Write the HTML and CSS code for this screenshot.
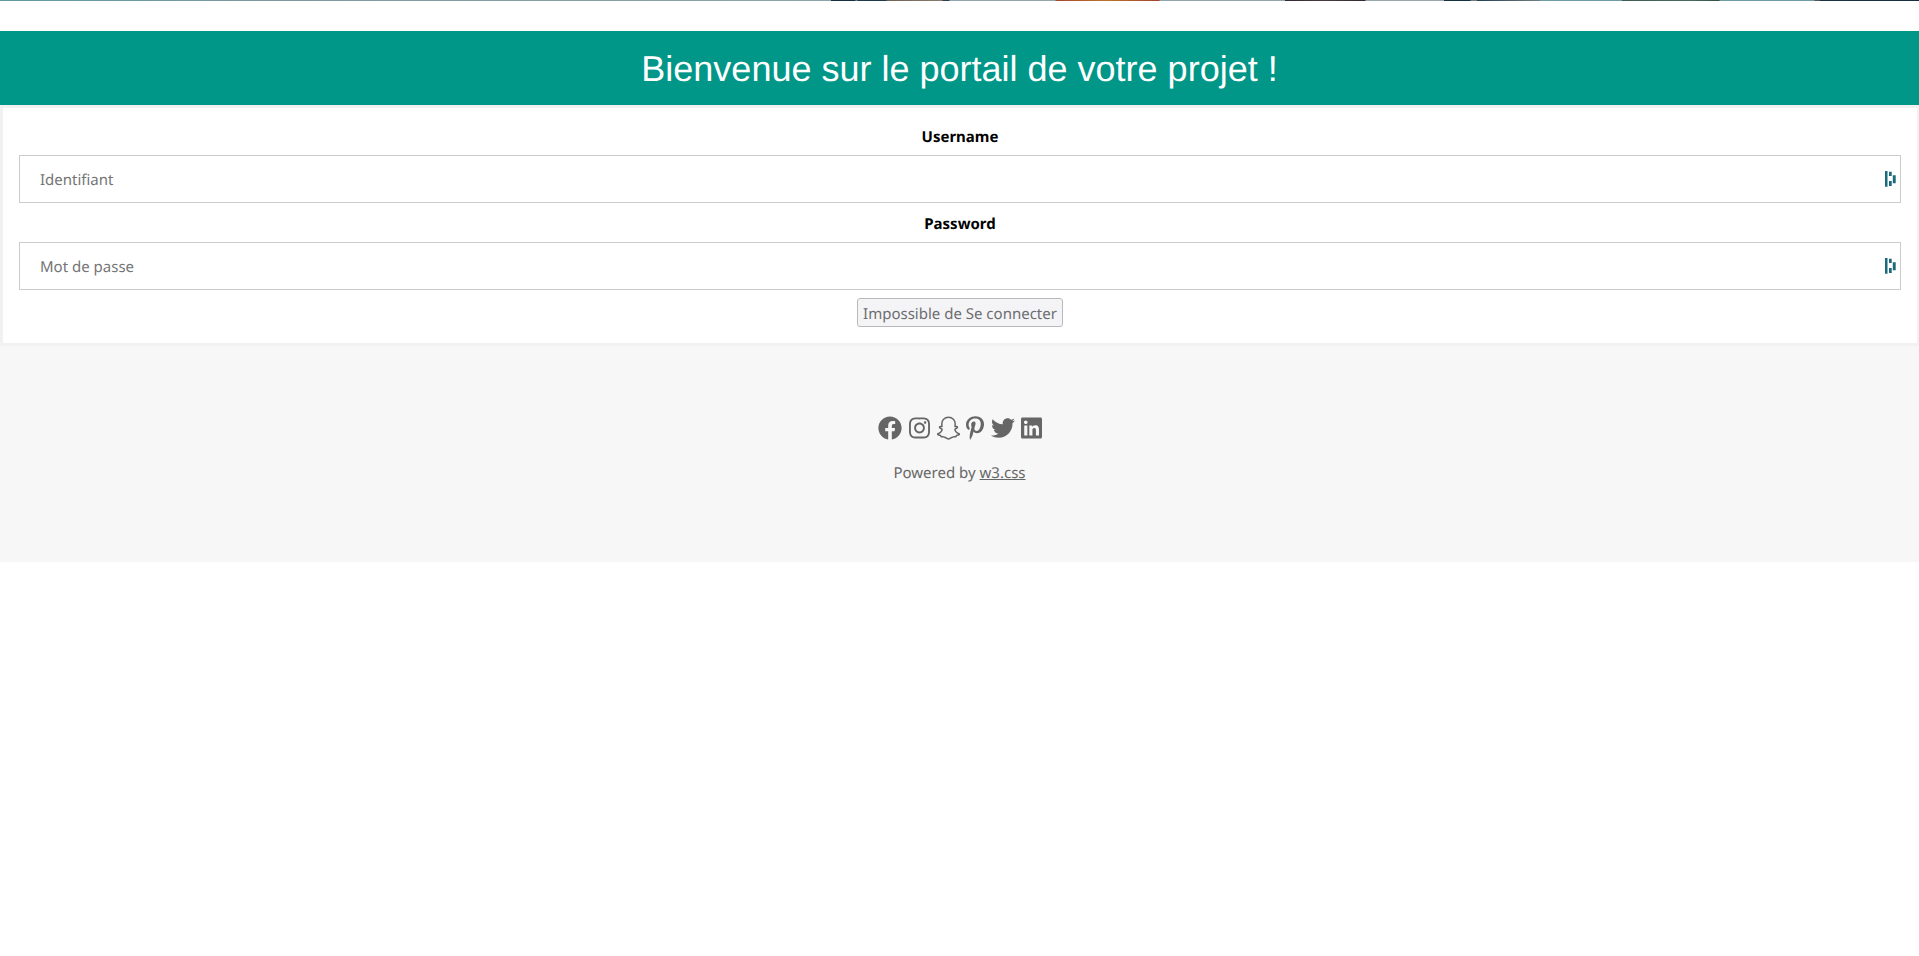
FILE: index.html
```html
<!DOCTYPE html>
<html lang="fr">
<head>
<meta charset="utf-8">
<title>Portail</title>
<link rel="stylesheet" href="styles.css">
</head>
<body>
<div class="strip"></div>
<header class="banner"><h1>Bienvenue sur le portail de votre projet !</h1></header>
<form class="card">
  <label class="lbl" for="u">Username</label>
  <div class="field">
    <input id="u" class="inp" type="text" placeholder="Identifiant">
    <svg class="pm" viewBox="0 0 12 16" width="12" height="16"><path d="M0 0h2.500v15.700H0zM4 .7h2.700v4.300H4zM4 10h2.700v5H4zM7.800 4.300h2.900v8H7.800z"/></svg>
  </div>
  <label class="lbl lbl2" for="p">Password</label>
  <div class="field">
    <input id="p" class="inp" type="password" placeholder="Mot de passe">
    <svg class="pm" viewBox="0 0 12 16" width="12" height="16"><path d="M0 0h2.500v15.700H0zM4 .7h2.700v4.300H4zM4 10h2.700v5H4zM7.800 4.300h2.900v8H7.800z"/></svg>
  </div>
  <div class="actions"><button class="btn" type="button" disabled>Impossible de Se connecter</button></div>
</form>
<footer class="foot">
  <div class="icons">
    <svg class="ic w24" viewBox="0 0 512 512"><path d="M504 256C504 119 393 8 256 8S8 119 8 256c0 123.78 90.69 226.38 209.25 245V327.69h-63V256h63v-54.64c0-62.15 37-96.48 93.67-96.48 27.14 0 55.52 4.84 55.52 4.84v61h-31.28c-30.8 0-40.41 19.12-40.41 38.73V256h68.78l-11 71.69h-57.78V501C413.31 482.38 504 379.78 504 256z"/></svg>
    <svg class="ic w21 nudge" viewBox="0 0 448 512"><path d="M224.1 141c-63.6 0-114.9 51.3-114.9 114.9s51.3 114.9 114.9 114.9S339 319.5 339 255.9 287.7 141 224.1 141zm0 189.6c-41.1 0-74.7-33.5-74.7-74.7s33.5-74.7 74.7-74.7 74.7 33.5 74.7 74.7-33.6 74.7-74.7 74.7zm146.4-194.3c0 14.9-12 26.8-26.8 26.8-14.9 0-26.8-12-26.8-26.8s12-26.8 26.8-26.8 26.8 12 26.8 26.8zm76.1 27.2c-1.7-35.9-9.9-67.7-36.2-93.9-26.2-26.2-58-34.4-93.9-36.2-37-2.1-147.9-2.1-184.9 0-35.8 1.7-67.6 9.9-93.9 36.1s-34.4 58-36.2 93.9c-2.1 37-2.1 147.9 0 184.9 1.7 35.9 9.9 67.7 36.2 93.9s58 34.4 93.9 36.2c37 2.1 147.9 2.1 184.9 0 35.9-1.7 67.7-9.9 93.9-36.2 26.2-26.2 34.4-58 36.2-93.9 2.1-37 2.1-147.8 0-184.8zM398.8 388c-7.8 19.6-22.9 34.7-42.6 42.6-29.5 11.7-99.5 9-132.1 9s-102.7 2.6-132.1-9c-19.6-7.8-34.7-22.9-42.6-42.6-11.7-29.5-9-99.5-9-132.1s-2.6-102.7 9-132.1c7.8-19.6 22.9-34.7 42.6-42.6 29.5-11.7 99.5-9 132.1-9s102.7-2.6 132.1 9c19.6 7.8 34.7 22.9 42.6 42.6 11.7 29.5 9 99.5 9 132.1s2.7 102.7-9 132.1z"/></svg>
    <svg class="ic w23 nudge" viewBox="0 0 23 24"><path class="ghost" d="M11.500 1.300C15.600 1.300 18.200 4.300 18.200 7.800C18.200 8.800 18.100 9.700 18 10.500C18.800 10.800 19.500 10.200 20.100 10.600C20.800 11.100 20.400 11.900 19.500 12.300C18.800 12.600 17.900 12.800 17.900 13.500C17.900 14.900 20 17.300 22.100 17.800C22.500 17.900 22.500 18.400 22.100 18.600C21.300 19.100 20.100 19.200 19.500 19.400C19.100 19.600 19.200 20.600 18.800 20.800C18.200 21 17.100 20.600 16 20.900C14.700 21.200 13.500 22.900 11.500 22.900C9.500 22.900 8.300 21.200 7 20.900C5.900 20.600 4.800 21 4.200 20.800C3.800 20.600 3.900 19.600 3.500 19.400C2.900 19.200 1.700 19.100 .9 18.600C.5 18.400 .5 17.900 .9 17.800C3 17.300 5.100 14.900 5.100 13.500C5.100 12.800 4.200 12.600 3.500 12.300C2.600 11.900 2.200 11.100 2.900 10.600C3.500 10.200 4.200 10.800 5 10.500C4.900 9.700 4.800 8.800 4.800 7.800C4.800 4.300 7.400 1.300 11.500 1.300z"/></svg>
    <svg class="ic w18 nudge-half" viewBox="0 0 384 512"><path d="M204 6.500C101.400 6.500 0 74.900 0 185.600 0 256 39.600 296 63.600 296c9.900 0 15.600-27.600 15.600-35.400 0-9.300-23.700-29.100-23.700-67.800 0-80.400 61.200-137.400 140.400-137.400 68.100 0 118.500 38.700 118.500 109.800 0 53.100-21.300 152.700-90.300 152.700-24.900 0-46.200-18-46.200-43.800 0-37.800 26.400-74.400 26.400-113.400 0-66.200-93.900-54.200-93.900 25.800 0 16.800 2.100 35.400 9.600 50.700-13.800 59.400-42 147.900-42 209.100 0 18.900 2.700 37.500 4.500 56.400 3.400 3.800 1.700 3.400 6.900 1.500 50.400-69 48.600-82.500 71.400-172.800 12.300 23.400 44.100 36 69.300 36 106.200 0 153.900-103.500 153.900-196.800C384 71.300 298.200 6.500 204 6.500z"/></svg>
    <svg class="ic w24 nudge-half" viewBox="0 0 512 512"><path d="M459.370 151.716c.325 4.548.325 9.097.325 13.645 0 138.720-105.583 298.558-298.558 298.558-59.452 0-114.680-17.219-161.137-47.106 8.447.974 16.568 1.299 25.340 1.299 49.055 0 94.213-16.568 130.274-44.832-46.132-.975-84.792-31.188-98.112-72.772 6.498.974 12.995 1.624 19.818 1.624 9.421 0 18.843-1.300 27.614-3.573-48.081-9.747-84.143-51.980-84.143-102.985v-1.299c13.969 7.797 30.214 12.670 47.431 13.319-28.264-18.843-46.781-51.005-46.781-87.391 0-19.492 5.197-37.360 14.294-52.954 51.655 63.675 129.300 105.258 216.365 109.807-1.624-7.797-2.599-15.918-2.599-24.040 0-57.828 46.782-104.934 104.934-104.934 30.213 0 57.502 12.670 76.670 33.137 23.715-4.548 46.456-13.320 66.599-25.340-7.798 24.366-24.366 44.833-46.132 57.827 21.117-2.273 41.584-8.122 60.426-16.243-14.292 20.791-32.161 39.308-52.628 54.253z"/></svg>
    <svg class="ic w21" viewBox="0 0 448 512"><path d="M416 32H31.900C14.300 32 0 46.500 0 64.300v383.400C0 465.500 14.300 480 31.900 480H416c17.600 0 32-14.500 32-32.300V64.300c0-17.800-14.400-32.300-32-32.300zM135.400 416H69V202.200h66.500V416zm-33.200-243c-21.300 0-38.500-17.300-38.500-38.500S80.900 96 102.200 96c21.200 0 38.500 17.300 38.500 38.500 0 21.300-17.200 38.500-38.500 38.500zm282.100 243h-66.400V312c0-24.800-.5-56.700-34.500-56.700-34.600 0-39.900 27-39.900 54.900V416h-66.400V202.200h63.700v29.200h.9c8.900-16.800 30.600-34.500 62.900-34.500 67.200 0 79.700 44.300 79.700 101.900V416z"/></svg>
  </div>
  <p class="powered">Powered by <a href="#">w3.css</a></p>
</footer>
</body>
</html>
```
FILE: styles.css
```css
* { box-sizing: border-box; }
html, body { margin: 0; padding: 0; background: #fff; }
body { font-family: "Noto Sans", "Open Sans", sans-serif; font-size: 15px; line-height: 1.5; color: #000; text-rendering: geometricPrecision; }

.strip {
  height: 1px;
  background: linear-gradient(90deg,
    #5f9aa0 0, #7f989f 280px, #8fa3aa 831px,
    #14303f 831px, #14303f 855px, #8a9ea5 856px, #1d3a4c 858px, #1d3a4c 886px, #6d6258 887px, #8a7a68 942px, #2b3f55 943px, #2b3f55 949px,
    #93a5ad 950px, #93a5ad 1055px,
    #a8452f 1056px, #b8752a 1105px, #a8412f 1159px,
    #93a5ad 1160px, #93a5ad 1285px,
    #2e2a30 1285px, #4a3a40 1325px, #2e2a30 1365px,
    #9aa8ae 1366px, #9aa8ae 1444px,
    #12323f 1444px, #12323f 1470px, #777 1471px, #777 1477px,
    #1f4054 1477px, #5a6a70 1520px, #6d7f85 1540px,
    #6f9da3 1540px, #6f9da3 1622px,
    #3e5c52 1622px, #476b5f 1690px, #33503f 1719px,
    #6f9da3 1720px, #6f9da3 1814px,
    #555 1815px, #555 1820px, #1c3040 1820px, #15303e 1919px);
}

.banner { margin-top: 30px; height: 74px; padding-top: 1px; background: #009688; color: #fff; display: flex; align-items: center; justify-content: center; }
.banner h1 { margin: 0; font-family: "Liberation Sans", Arial, sans-serif; font-size: 36px; font-weight: 400; line-height: 1.2; }

.card { border: 3px solid #f1f1f1; border-right-width: 2px; padding: 17px 16px 16px; display: flex; flex-direction: column; }
.lbl { display: block; text-align: center; font-weight: 700; line-height: 23px; padding-top: 1px; margin-bottom: 6px; }
.lbl2 { margin-top: 9px; }
.field { position: relative; }
.inp { display: block; width: 100%; height: 48px; border: 1px solid #ccc; padding: 9px 20px 7px; font: inherit; color: #000; background: #fff; outline: 0; border-radius: 0; text-rendering: geometricPrecision; }
.inp::placeholder { color: #757575; opacity: 1; }
.pm { position: absolute; right: 4px; top: 16px; fill: #1b6a7c; }

.actions { margin-top: 8px; display: flex; justify-content: center; }
.btn { height: 29px; width: 206px; padding: 3px 0 0; font: inherit; line-height: 1; color: #6d6d71; background: #f4f4f6; border: 1px solid #b9b9bc; border-radius: 3px; text-rendering: geometricPrecision; }

.foot { height: 216px; background: #f7f7f7; padding-top: 70px; color: #666; text-align: center; }
.icons { display: flex; justify-content: center; align-items: center; gap: 6px; height: 24px; }
.ic { display: block; height: 24px; fill: #666; }
.w24 { width: 24px; }
.w23 { width: 23px; }
.w21 { width: 21px; }
.w18 { width: 18px; }
.nudge { margin-left: 1px; }
.nudge-half { margin-left: .5px; }
.ghost { fill: none; stroke: #666; stroke-width: 1.5; stroke-linejoin: round; }
.powered { margin: 22px 0 0; line-height: 23px; }
.powered a { color: inherit; text-decoration: underline; }
```
